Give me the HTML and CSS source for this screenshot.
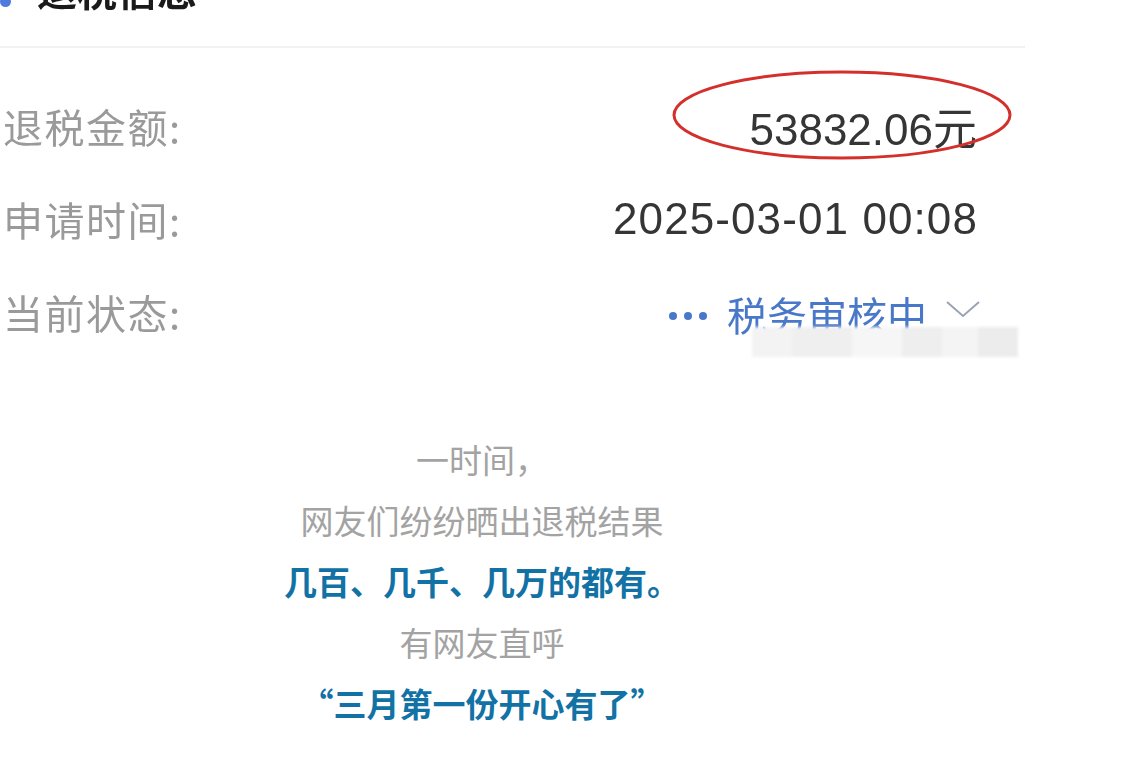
FILE: index.html
```html
<!DOCTYPE html>
<html lang="zh-CN">
<head>
<meta charset="utf-8">
<title>退税信息</title>
<link rel="stylesheet" href="styles.css">
</head>
<body>
<div class="page">
  <section class="shot">
    <div class="shot-head">
      <span class="dot"></span>
      <span class="shot-title">退税信息</span>
    </div>
    <div class="rows">
      <div class="row">
        <span class="label">退税金额:</span>
        <span class="value amount">53832.06元</span>
        <svg class="ring" width="342" height="92" viewBox="0 0 342 92">
          <ellipse cx="171" cy="46" rx="168" ry="43" fill="none" stroke="#d4302b" stroke-width="3"/>
        </svg>
      </div>
      <div class="row">
        <span class="label">申请时间:</span>
        <span class="value date">2025-03-01 00:08</span>
      </div>
      <div class="row">
        <span class="label">当前状态:</span>
        <span class="value status">
          <span class="dots"><i class="d"></i><i class="d"></i><i class="d"></i></span>
          <span class="status-text">税务审核中</span>
          <svg class="chev" width="36" height="20" viewBox="0 0 36 20">
            <path d="M2 3 L18 17 L34 3" fill="none" stroke="#9aa3b5" stroke-width="2"/>
          </svg>
        </span>
        <div class="mosaic">
          <span class="m m1"></span><span class="m m2"></span><span class="m m3"></span><span class="m m4"></span><span class="m m5"></span><span class="m m6"></span>
        </div>
      </div>
    </div>
  </section>

  <section class="article">
    <p class="line">一时间，</p>
    <p class="line">网友们纷纷晒出退税结果</p>
    <p class="line strong">几百、几千、几万的都有。</p>
    <p class="line">有网友直呼</p>
    <p class="line strong">“三月第一份开心有了”</p>
  </section>
</div>
</body>
</html>
```

FILE: styles.css
```css
html, body {
  margin: 0;
  padding: 0;
  background: #ffffff;
}

body {
  width: 1128px;
  height: 769px;
  overflow: hidden;
  font-family: "Noto Sans CJK SC", "Noto Sans", sans-serif;
}

.page {
  display: flex;
  flex-direction: column;
}

.shot {
  width: 1025px;
  display: flex;
  flex-direction: column;
}

.shot-head {
  display: flex;
  align-items: center;
  margin-top: -31px;
  height: 40px;
  padding-bottom: 37px;
  border-bottom: 2px solid #f1f1f1;
}

.dot {
  width: 11px;
  height: 11px;
  border-radius: 50%;
  background: #4d7be0;
  margin-top: 24px;
  filter: blur(0.6px);
}

.shot-title {
  margin-left: 26px;
  font-size: 40px;
  line-height: 40px;
  font-weight: 700;
  color: #1a1a1a;
  filter: blur(0.7px);
}

.rows {
  display: flex;
  flex-direction: column;
  padding-top: 31px;
}

.row {
  position: relative;
  height: 93px;
  display: flex;
  align-items: center;
  justify-content: space-between;
  padding-right: 48px;
}

.label {
  font-size: 40px;
  color: #9a9a9a;
  padding-left: 3px;
  letter-spacing: 1.5px;
  filter: blur(0.5px);
}

.value {
  font-family: "Liberation Sans", "Noto Sans CJK SC", sans-serif;
  font-size: 44px;
  color: #353535;
  filter: blur(0.4px);
}

.date {
  letter-spacing: 1.1px;
  margin-right: -1px;
}

.ring {
  position: absolute;
  left: 671px;
  top: -10px;
  filter: blur(0.4px);
}

.status {
  display: flex;
  align-items: center;
  font-family: "Noto Sans CJK SC", sans-serif;
  font-size: 40px;
  color: #4a78c9;
  margin-top: 4px;
  margin-right: -4px;
}

.dots {
  display: flex;
  gap: 7px;
  margin-right: 20px;
  margin-top: 4px;
}

.d {
  display: block;
  width: 8px;
  height: 8px;
  border-radius: 50%;
  background: #4a78c9;
}

.chev {
  margin-left: 18px;
  margin-top: -10px;
}

.mosaic {
  position: absolute;
  left: 752px;
  top: 62px;
  width: 266px;
  height: 30px;
  display: flex;
  background: rgba(243, 243, 244, 0.95);
  filter: blur(1.5px);
}

.m {
  height: 100%;
}

.m1 { width: 40px; background: #f3f3f4; }
.m2 { width: 60px; background: #efeff0; }
.m3 { width: 50px; background: #f6f6f6; }
.m4 { width: 40px; background: #eeeeef; }
.m5 { width: 36px; background: #f4f4f5; }
.m6 { width: 40px; background: #ececed; }

.article {
  width: 964px;
  display: flex;
  flex-direction: column;
  align-items: center;
  padding-top: 71px;
}

.line {
  margin: 0;
  font-size: 33px;
  line-height: 61px;
  color: #a3a3a3;
  text-align: center;
}

.strong {
  font-weight: 700;
  color: #1272a5;
}
```
